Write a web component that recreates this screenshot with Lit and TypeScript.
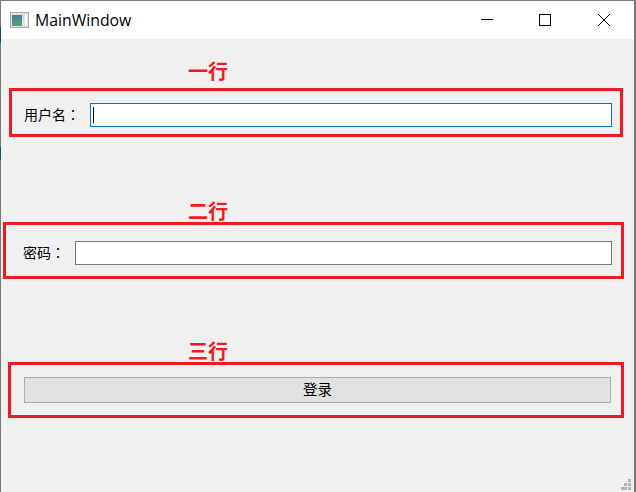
import { LitElement, html, css } from "lit";
import { customElement } from "lit/decorators.js";

@customElement("app-root")
export class AppRoot extends LitElement {
  static styles = css`
    :host { display: block; width: 636px; height: 492px; background: #fff; overflow: hidden; }
    .window {
      box-sizing: border-box; width: 636px; height: 492px;
      border-top: 1px solid #7a7a7a; border-left: 1px solid #7a7a7a; border-right: 2px solid #7a7a7a;
      display: flex; flex-direction: column; position: relative; background: #f0f0f0;
      font-family: "Noto Sans CJK SC", sans-serif; color: #000;
    }
    .titlebar { height: 38px; flex: none; background: #fff; display: flex; align-items: center; padding-left: 9px; }
    .app-icon { flex: none; width: 19px; height: 16px; margin-top: -1px; }
    .title { font: 400 15.8px/20px "Open Sans", sans-serif; margin-left: 6px; flex: 1; color: #000; }
    .caps { display: flex; align-self: stretch; margin-right: 1px; }
    .cap { width: 58px; display: flex; align-items: center; justify-content: center; }
    .cap:last-child { margin-left: 1px; }
    .cap svg { display: block; width: 12px; height: 12px; }
    .content { flex: 1; display: flex; flex-direction: column; background: #f0f0f0; }
    .note {
      height: 20px; line-height: 20px; font-size: 20px; font-weight: 700; color: #ed1c24;
      margin-left: 187px;
    }
    .n1 { margin-top: 22px; }
    .n2 { margin-top: 64px; }
    .n3 { margin-top: 62px; }
    .frame { box-sizing: border-box; border: 3px solid #ed1c24; display: flex; align-items: center; }
    .f1 { margin: 7px 0 0 8px; width: 614px; height: 49px; padding: 5px 8px 0 12px; }
    .f2 { margin: 1px 0 0 2px; width: 621px; height: 57px; padding: 4px 9px 0 17px; }
    .f3 { margin: 1px 0 0 7px; width: 616px; height: 56px; padding: 0 10px 0 13px; }
    .label { font-size: 14px; line-height: 20px; flex: none; white-space: nowrap; padding-bottom: 2px; }
    .colon { font-family: "Noto Sans CJK TC", sans-serif; }
    .input { box-sizing: border-box; flex: 1; height: 24px; background: #fff; border: 1px solid #7a7a7a; display: flex; align-items: center; padding-left: 2px; }
    .f1 .label { width: 66px; }
    .f1 .input { border-color: #0078d7; }
    .f2 .label { width: 52px; }
    .caret { width: 1px; height: 16px; background: #000; }
    .button {
      box-sizing: border-box; flex: 1; height: 26px; background: #e1e1e1; border: 1px solid #adadad;
      display: flex; align-items: center; justify-content: center; font-size: 14.5px; line-height: 20px;
      padding: 0 0 2px; color: #000; font-family: inherit;
    }
    .grip { position: absolute; right: 2px; bottom: 1px; width: 11px; height: 12px; display: block; }
    .sliver { position: absolute; left: -1px; width: 1px; background: #17505c; }
    .s1 { top: 26px; height: 16px; }
    .s2 { top: 146px; height: 13px; }
  `;

  render() {
    return html`
      <div class="window">
        <div class="titlebar">
          <svg class="app-icon" viewBox="0 0 19 16" aria-hidden="true">
            <defs>
              <linearGradient id="g" x1="0" y1="0" x2="0" y2="1">
                <stop offset="0" stop-color="#3f7f9f" />
                <stop offset="1" stop-color="#5f9f6f" />
              </linearGradient>
            </defs>
            <rect x="0.5" y="0.5" width="18" height="15" fill="#dfe3e4" stroke="#a9adb0" />
            <rect x="2" y="3" width="10" height="11" fill="url(#g)" />
            <rect x="13" y="3" width="1" height="5" fill="#b9d6cc" />
            <rect x="15" y="3" width="2" height="11" fill="#f7f9f9" />
          </svg>
          <div class="title">MainWindow</div>
          <div class="caps">
            <div class="cap">
              <svg viewBox="0 0 12 12" aria-hidden="true"><path d="M0 5.5H12" stroke="#000" fill="none" /></svg>
            </div>
            <div class="cap">
              <svg viewBox="0 0 12 12" aria-hidden="true"><rect x="0.5" y="0.5" width="11" height="11" stroke="#000" fill="none" /></svg>
            </div>
            <div class="cap">
              <svg viewBox="0 0 12 12" aria-hidden="true"><path d="M0 0L12 12M12 0L0 12" stroke="#000" fill="none" /></svg>
            </div>
          </div>
        </div>
        <div class="content">
          <div class="note n1">一行</div>
          <div class="frame f1">
            <span class="label">用户名<span class="colon">：</span></span>
            <div class="input"><span class="caret"></span></div>
          </div>
          <div class="note n2">二行</div>
          <div class="frame f2">
            <span class="label">密码<span class="colon">：</span></span>
            <div class="input"></div>
          </div>
          <div class="note n3">三行</div>
          <div class="frame f3">
            <button class="button">登录</button>
          </div>
        </div>
        <span class="sliver s1"></span>
        <span class="sliver s2"></span>
        <svg class="grip" viewBox="0 0 11 12" aria-hidden="true" fill="#b4b4b4">
          <rect x="7" y="0" width="3" height="3" />
          <rect x="3" y="4" width="3" height="3" />
          <rect x="7" y="4" width="3" height="3" />
          <rect x="0" y="8" width="3" height="3" />
          <rect x="3" y="8" width="3" height="3" />
          <rect x="7" y="8" width="3" height="3" />
        </svg>
      </div>
    `;
  }
}
